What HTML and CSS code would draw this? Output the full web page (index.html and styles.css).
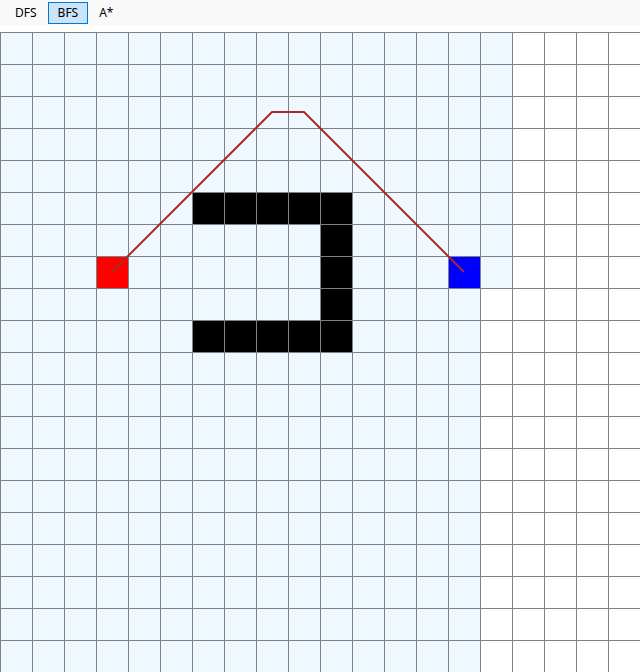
FILE: index.html
```html
<!DOCTYPE html>
<html>
<head>
<meta charset="utf-8">
<link rel="stylesheet" href="styles.css">
</head>
<body>
<div class="toolbar">
  <button class="tool">DFS</button>
  <button class="tool active">BFS</button>
  <button class="tool">A*</button>
</div>
<div class="board">
  <div class="visited visited-top"></div>
  <div class="visited visited-bottom"></div>
  <div class="wall wall-top"></div>
  <div class="wall wall-side"></div>
  <div class="wall wall-bottom"></div>
  <div class="start"></div>
  <div class="goal"></div>
  <div class="lines"></div>
  <svg class="path" width="640" height="640" viewBox="0 0 640 640">
    <polyline points="112,240 272,80 304,80 464,240" fill="none" stroke="#a52a2a" stroke-width="2" stroke-linejoin="miter"/>
  </svg>
</div>
</body>
</html>
```

FILE: styles.css
```css
html, body {
  margin: 0;
  padding: 0;
  background: #ffffff;
  overflow: hidden;
}
body {
  width: 640px;
  height: 672px;
  font-family: "Segoe UI", "Noto Sans", "Liberation Sans", sans-serif;
}
.toolbar {
  height: 25px;
  background: #f9f9f9;
  display: flex;
  align-items: center;
  padding-left: 5px;
  gap: 1px;
  box-sizing: border-box;
}
.tool {
  font-family: "Segoe UI", "Noto Sans", "Liberation Sans", sans-serif;
  font-size: 12px;
  color: #000;
  background: transparent;
  border: 1px solid transparent;
  padding: 0 9px;
  height: 22px;
  margin: 0;
  line-height: 20px;
}
.tool.active {
  background: #cce4f7;
  border-color: #0078d7;
}
.board {
  position: relative;
  margin-top: 7px;
  width: 640px;
  height: 640px;
  display: grid;
  grid-template-columns: repeat(20, 32px);
  grid-template-rows: repeat(20, 32px);
}
.visited { background: #f0f8ff; }
.visited-top { grid-column: 1 / 17; grid-row: 1 / 9; }
.visited-bottom { grid-column: 1 / 16; grid-row: 9 / 21; }
.wall { background: #000000; }
.wall-top { grid-column: 7 / 12; grid-row: 6 / 7; }
.wall-side { grid-column: 11 / 12; grid-row: 7 / 10; }
.wall-bottom { grid-column: 7 / 12; grid-row: 10 / 11; }
.start { grid-column: 4 / 5; grid-row: 8 / 9; background: #ff0000; }
.goal { grid-column: 15 / 16; grid-row: 8 / 9; background: #0000ff; }
.lines {
  position: absolute;
  inset: 0;
  background-image:
    repeating-linear-gradient(to right, #808080 0 1px, transparent 1px 32px),
    repeating-linear-gradient(to bottom, #808080 0 1px, transparent 1px 32px);
  pointer-events: none;
}
.path {
  position: absolute;
  left: 0;
  top: 0;
  pointer-events: none;
}
```
